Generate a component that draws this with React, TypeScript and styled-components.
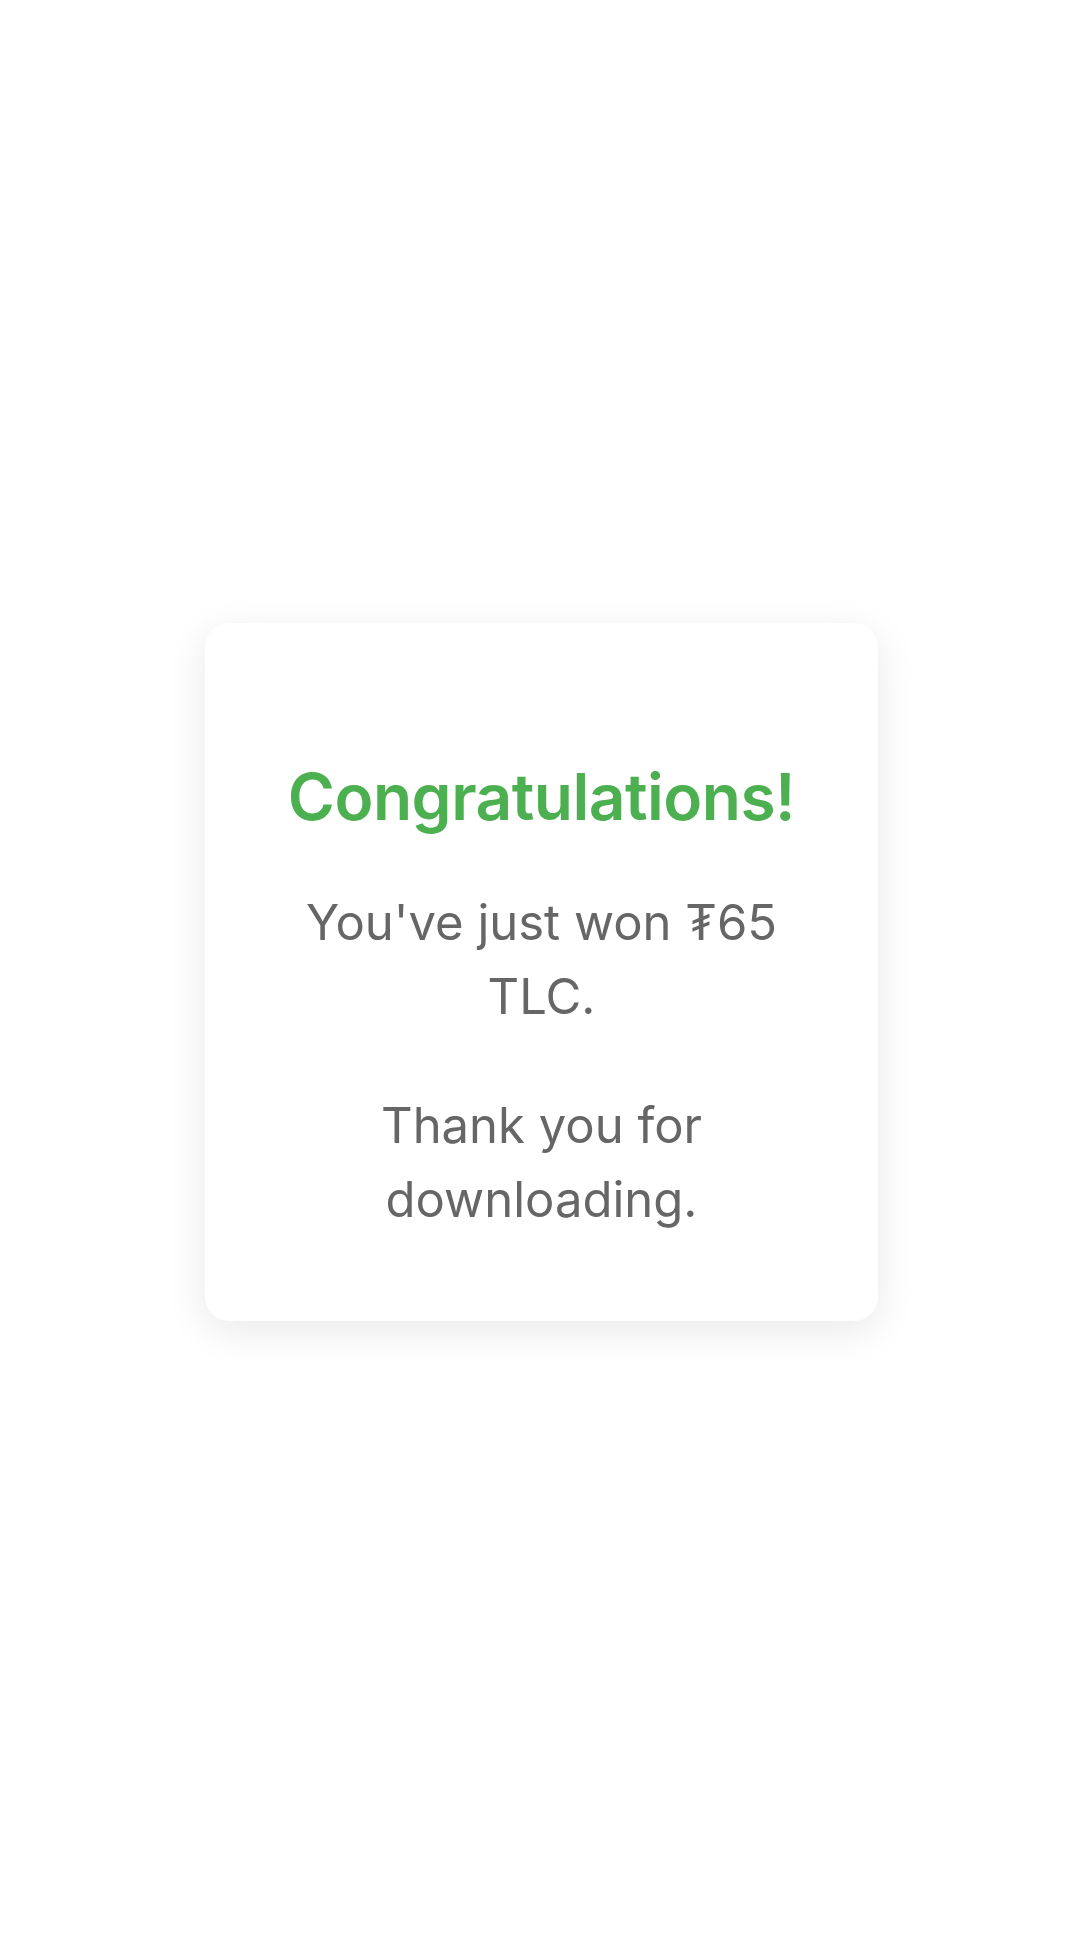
import React from "react";
import styled, { createGlobalStyle } from "styled-components";

const GlobalStyle = createGlobalStyle`
  html, body {
    margin: 0;
    padding: 0;
    background: #ffffff;
  }
  body {
    font-family: Inter, "Noto Sans", "DejaVu Sans", sans-serif;
  }
  * { box-sizing: border-box; }
`;

const Page = styled.main`
  min-height: 1936px;
  display: flex;
  align-items: flex-start;
  justify-content: center;
  padding: 623px 0 0 3px;
`;

const Card = styled.section`
  width: 673px;
  padding: 136px 72px 84px;
  background: #ffffff;
  border-radius: 24px;
  box-shadow: 0 10px 40px rgba(0, 0, 0, 0.09);
  display: flex;
  flex-direction: column;
  align-items: center;
  text-align: center;
`;

const Title = styled.h2`
  margin: 0 0 50px;
  font-family: Inter, "Noto Sans", sans-serif;
  font-weight: 600;
  font-size: 64px;
  line-height: 1.2;
  letter-spacing: -0.5px;
  color: #4caf50;
  white-space: nowrap;
`;

const Message = styled.p<{ $gap?: number }>`
  margin: 0 0 ${(p) => p.$gap ?? 0}px;
  font-family: Inter, "Noto Sans", "DejaVu Sans", sans-serif;
  font-weight: 400;
  font-size: 49px;
  line-height: 74px;
  color: #666666;
`;

export default function App() {
  return (
    <>
      <GlobalStyle />
      <Page>
        <Card>
          <Title>Congratulations!</Title>
          <Message $gap={55}>You've just won ₮65 TLC.</Message>
          <Message>Thank you for downloading.</Message>
        </Card>
      </Page>
    </>
  );
}
